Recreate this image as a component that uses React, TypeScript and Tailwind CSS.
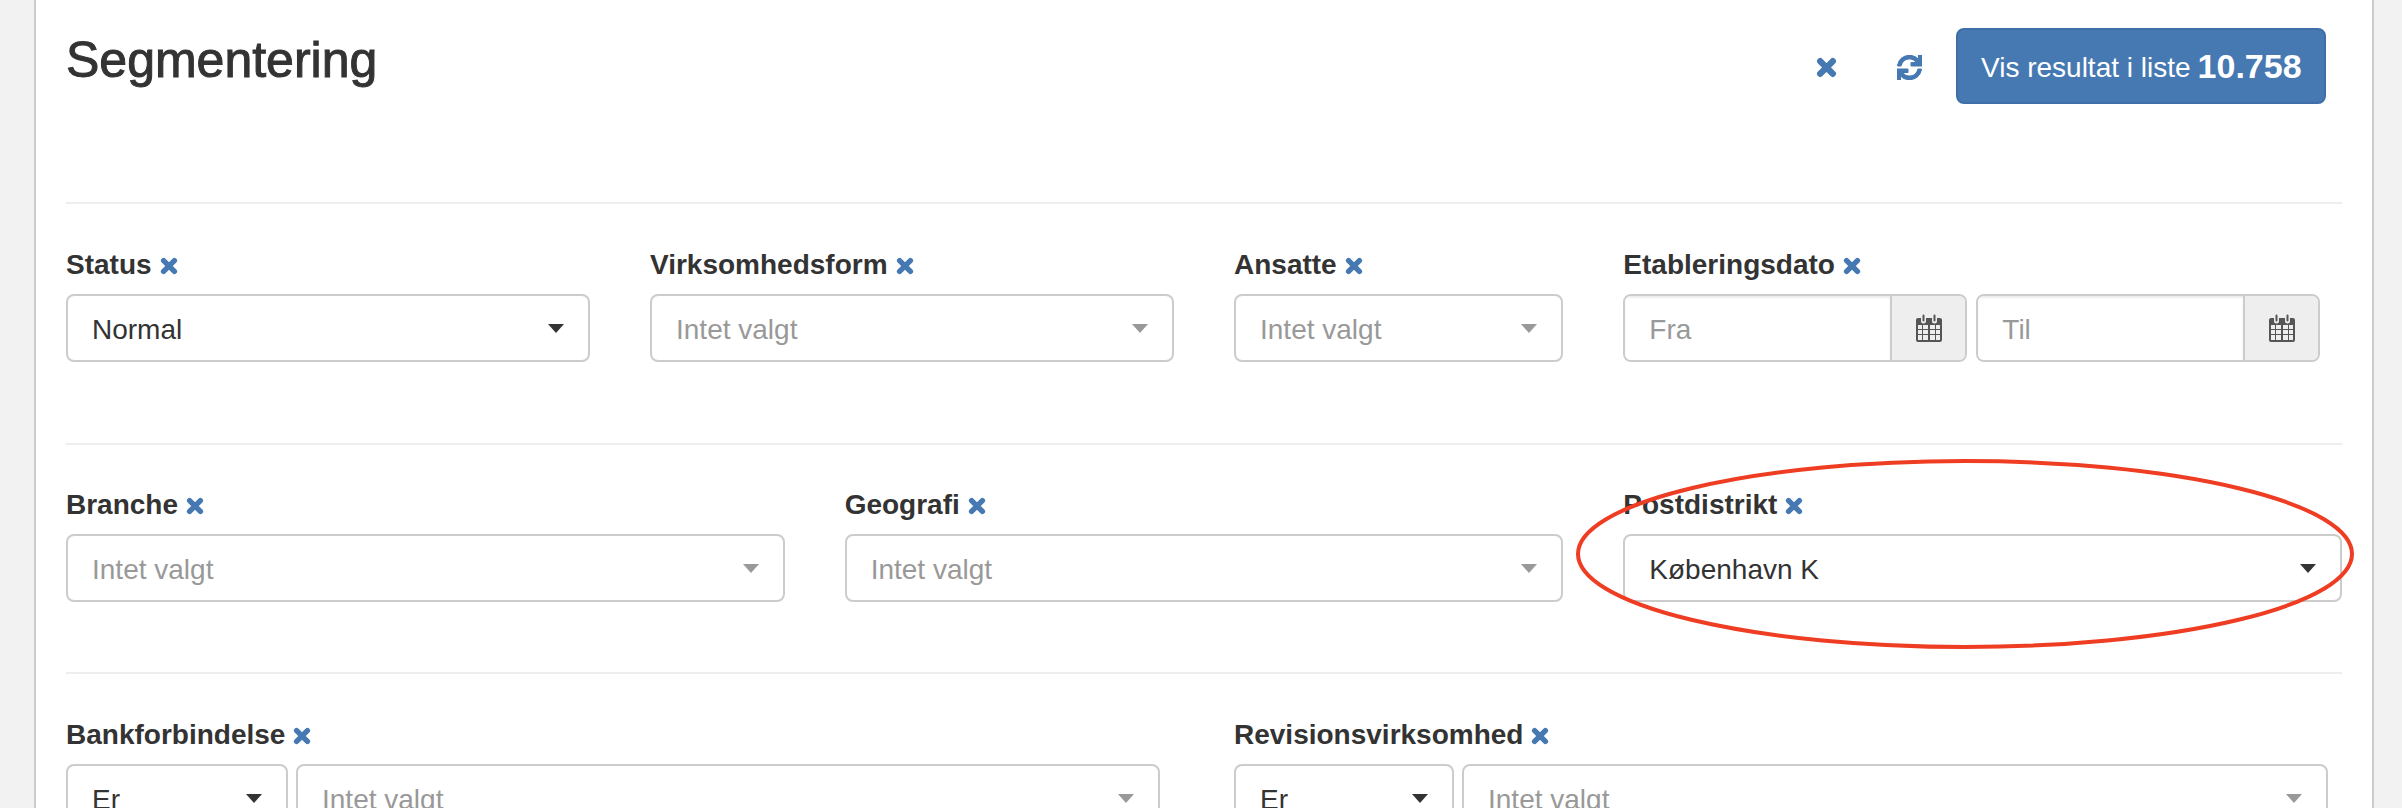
import React from "react";
import { FaSync } from "react-icons/fa";

const CloseIcon = ({ className }: { className: string }) => (
  <svg viewBox="0 0 20 20" className={className}>
    <path d="M4 4L16 16M16 4L4 16" stroke="#4679b2" strokeWidth="6" strokeLinecap="round" fill="none" />
  </svg>
);

const CalendarIcon = () => (
  <svg viewBox="0 0 26 28" className="w-[26px] h-[28px]">
    <path
      fillRule="evenodd"
      fill="#555"
      d="M2 4h3v3a2.5 2.5 0 0 0 5 0V4h6v3a2.5 2.5 0 0 0 5 0V4h3a2 2 0 0 1 2 2v20a2 2 0 0 1-2 2H2a2 2 0 0 1-2-2V6a2 2 0 0 1 2-2zM2 11v4h4v-4zM7 11v4h5v-4zM14 11v4h5v-4zM20 11v4h4v-4zM2 16v4h4v-4zM7 16v4h5v-4zM14 16v4h5v-4zM20 16v4h4v-4zM2 21v5h4v-5zM7 21v5h5v-5zM14 21v5h5v-5zM20 21v5h4v-5z"
    />
    <path d="M6.5 1.5a1 1 0 0 1 2 0v5a1 1 0 0 1-2 0zM17.5 1.5a1 1 0 0 1 2 0v5a1 1 0 0 1-2 0z" fill="#555" />
  </svg>
);

const FieldLabel = ({ text }: { text: string }) => (
  <div className="flex items-center h-10 mb-[9px] text-[28px] font-bold whitespace-nowrap text-[#333]">
    {text}
    <CloseIcon className="w-[18px] h-[18px] ml-2 mt-[2px]" />
  </div>
);

const Select = ({ value, placeholder, className = "" }: { value?: string; placeholder?: string; className?: string }) => (
  <div className={`flex items-center justify-between h-[68px] pl-[24px] pr-[24px] bg-white border-2 border-[#ccc] rounded-lg text-[28px] ${className}`}>
    <span className={`mt-[3px] ${value ? "text-[#333]" : "text-[#999]"}`}>{value ?? placeholder}</span>
    <span className={`w-0 h-0 border-x-8 border-x-transparent border-t-[9px] ${value ? "border-t-[#333]" : "border-t-[#999]"}`} />
  </div>
);

const DateInput = ({ placeholder }: { placeholder: string }) => (
  <div className="flex w-[344px] h-[68px] border-2 border-[#ccc] rounded-lg overflow-hidden text-[28px]">
    <div className="flex-1 flex items-center pl-[24px] pt-[3px] text-[#999] bg-white shadow-[inset_0_2px_2px_rgba(0,0,0,0.075)]">{placeholder}</div>
    <div className="w-[75px] flex items-center justify-center bg-[#eee] border-l-2 border-[#ccc]">
      <CalendarIcon />
    </div>
  </div>
);

const App = () => {
  return (
    <div className="h-[808px] overflow-hidden bg-[#f2f2f2] pl-[34px] pr-[28px] font-['Liberation_Sans',sans-serif]">
      <div className="relative h-full bg-white border-x-2 border-[#ccc] px-[30px]">
        <div className="flex justify-between h-[202px] pt-[28px]">
          <h1 className="text-[50px] leading-[56px] mt-[4px] text-[#333] [-webkit-text-stroke:1px_#333]">Segmentering</h1>
          <div className="flex items-start mr-[16px]">
            <CloseIcon className="w-[21px] h-[21px] mt-[29px]" />
            <FaSync className="w-[25px] h-[25px] mt-[27px] ml-[60px] text-[#4679b2]" stroke="currentColor" strokeWidth={24} />
            <button className="flex items-center h-[76px] w-[370px] ml-[34px] pl-[23px] pt-[3px] bg-[#4679b2] border-2 border-[#3f6fa6] rounded-lg text-white text-[28px] whitespace-nowrap">
              Vis resultat i liste <b className="text-[34px] ml-[7px] -mt-[3px]">10.758</b>
            </button>
          </div>
        </div>

        <div className="border-t-2 border-[#eee] pt-[41px] pb-[81px] grid grid-cols-12 gap-x-[60px]">
          <div className="col-span-3">
            <FieldLabel text="Status" />
            <Select value="Normal" />
          </div>
          <div className="col-span-3">
            <FieldLabel text="Virksomhedsform" />
            <Select placeholder="Intet valgt" />
          </div>
          <div className="col-span-2">
            <FieldLabel text="Ansatte" />
            <Select placeholder="Intet valgt" />
          </div>
          <div className="col-span-4">
            <FieldLabel text="Etableringsdato" />
            <div className="flex gap-[9px]">
              <DateInput placeholder="Fra" />
              <DateInput placeholder="Til" />
            </div>
          </div>
        </div>

        <div className="border-t-2 border-[#eee] pt-[40px] pb-[70px] grid grid-cols-12 gap-x-[60px]">
          <div className="col-span-4">
            <FieldLabel text="Branche" />
            <Select placeholder="Intet valgt" />
          </div>
          <div className="col-span-4">
            <FieldLabel text="Geografi" />
            <Select placeholder="Intet valgt" />
          </div>
          <div className="col-span-4">
            <FieldLabel text="Postdistrikt" />
            <Select value="København K" />
          </div>
        </div>

        <div className="border-t-2 border-[#eee] pt-[41px] grid grid-cols-12 gap-x-[60px]">
          <div className="col-span-6">
            <FieldLabel text="Bankforbindelse" />
            <div className="flex gap-[8px] pr-[14px]">
              <Select value="Er" className="w-[222px]" />
              <Select placeholder="Intet valgt" className="flex-1" />
            </div>
          </div>
          <div className="col-span-6">
            <FieldLabel text="Revisionsvirksomhed" />
            <div className="flex gap-[8px] pr-[14px]">
              <Select value="Er" className="w-[220px]" />
              <Select placeholder="Intet valgt" className="flex-1" />
            </div>
          </div>
        </div>

        {/* hand drawn marker round the Postdistrikt field */}
        <svg viewBox="0 0 784 196" className="absolute left-[1538px] top-[457px] w-[784px] h-[196px] pointer-events-none">
          <ellipse cx="391" cy="97" rx="387" ry="93" fill="none" stroke="#ee3d23" strokeWidth="4" />
        </svg>
      </div>
    </div>
  );
};

export default App;
